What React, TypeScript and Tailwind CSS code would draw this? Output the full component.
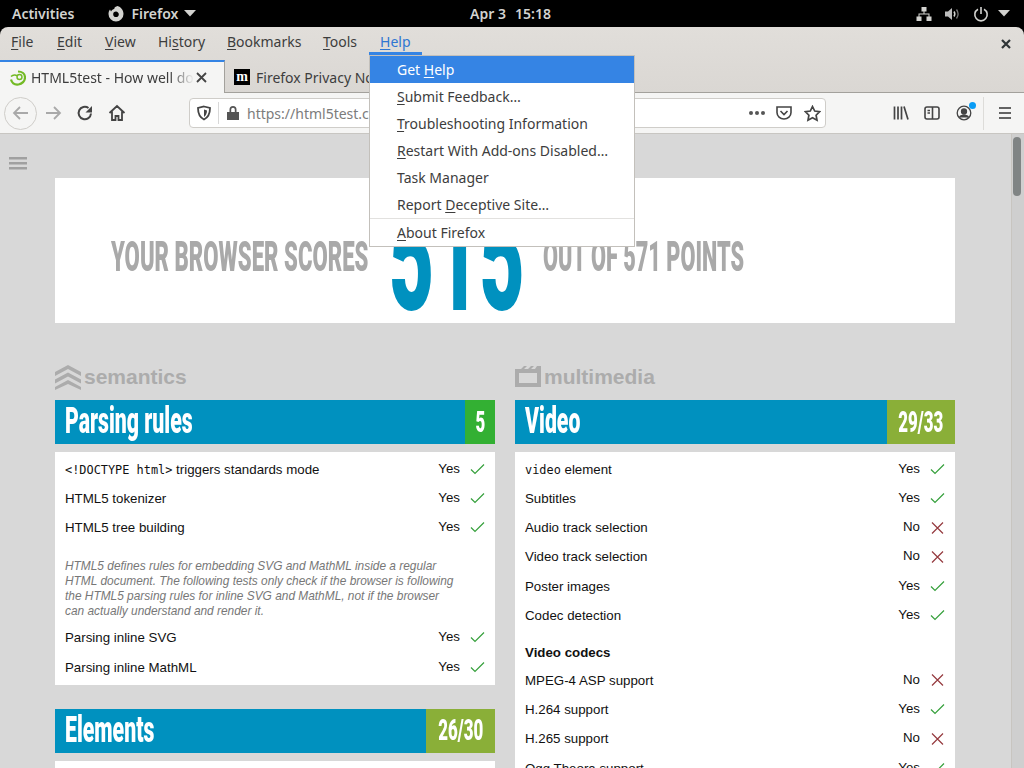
const ui = "font-['Noto_Sans',sans-serif]"
const condensed = "font-['Roboto','Liberation_Sans',sans-serif] font-black"

type Row = { label: string; code?: string; result: 'Yes' | 'No' }

const parsingA: Row[] = [
  { code: '<!DOCTYPE html>', label: ' triggers standards mode', result: 'Yes' },
  { label: 'HTML5 tokenizer', result: 'Yes' },
  { label: 'HTML5 tree building', result: 'Yes' },
]
const parsingB: Row[] = [
  { label: 'Parsing inline SVG', result: 'Yes' },
  { label: 'Parsing inline MathML', result: 'Yes' },
]
const videoA: Row[] = [
  { code: 'video', label: ' element', result: 'Yes' },
  { label: 'Subtitles', result: 'Yes' },
  { label: 'Audio track selection', result: 'No' },
  { label: 'Video track selection', result: 'No' },
  { label: 'Poster images', result: 'Yes' },
  { label: 'Codec detection', result: 'Yes' },
]
const videoB: Row[] = [
  { label: 'MPEG-4 ASP support', result: 'No' },
  { label: 'H.264 support', result: 'Yes' },
  { label: 'H.265 support', result: 'No' },
  { label: 'Ogg Theora support', result: 'Yes' },
]

function ResultRow({ row }: { row: Row }) {
  return (
    <div className="h-[29.3px] flex items-center text-[13.3px] text-[#111]">
      <span className="flex-1 pt-px whitespace-pre">
        {row.code && <code className="font-['DejaVu_Sans_Mono',monospace] text-[11.9px]">{row.code}</code>}
        {row.label}
      </span>
      <span className="-mt-px">{row.result}</span>
      <span className="w-[25px] flex justify-end">
        {row.result === 'Yes' ? (
          <svg width="15" height="11" viewBox="0 0 15 11" fill="none" stroke="#36a03c" strokeWidth="1.2"><path d="M1 5.500 5 9.500 14 0.500" /></svg>
        ) : (
          <svg width="15" height="12" viewBox="0 0 15 12" fill="none" stroke="#953a3f" strokeWidth="1.2"><path d="M2 0.500 13 11.500M13 0.500 2 11.500" /></svg>
        )}
      </span>
    </div>
  )
}

function SectionHead({ title, score, w }: { title: string; score: string; w: string }) {
  return (
    <div className="h-11 bg-[#0091bf] flex text-white">
      <div className="flex-1 pl-2.5 overflow-hidden">
        <span className={`${condensed} inline-block origin-left scale-x-[0.59] text-[36px] leading-[43px] whitespace-nowrap`}>{title}</span>
      </div>
      <div className={`${w} ${score === '5' ? 'bg-[#33b033]' : 'bg-[#8aaf38]'} flex items-center justify-center overflow-hidden`}>
        <span className={`${condensed} text-[29px] leading-none inline-block scale-x-[0.58] whitespace-nowrap`}>{score}</span>
      </div>
    </div>
  )
}

function Topbar() {
  return (
    <div className="h-[27px] bg-black text-[#d3d3d0] text-[14px] font-semibold flex items-center shrink-0 relative">
      <span className="ml-3">Activities</span>
      <svg width="18" height="18" viewBox="0 0 18 18" className="ml-[33px]">
        <path d="M10.500 1C14 2 16.500 5 16.500 9A7.500 7.500 0 1 1 1.500 9C1.500 7.200 2 5.800 3 4.500L4 6.500C4.800 5.200 6 4.200 7.500 3.800 7 3 7.500 2 10.500 1ZM9 6.500A2.800 2.800 0 1 0 11.800 9.300C11.800 8 10.500 6.500 9 6.500Z" fill="#d3d3d0" fillRule="evenodd" />
      </svg>
      <span className="ml-1.5">Firefox</span>
      <svg width="12" height="7" viewBox="0 0 12 7" className="ml-1.5"><path d="M0 0h12L6 6.500z" fill="#d3d3d0" /></svg>
      <span className="absolute left-[470px]">Apr 3</span>
      <span className="absolute left-[515px]">15:18</span>
      <div className="ml-auto flex items-center mr-[14px]">
        <svg width="16" height="16" viewBox="0 0 16 16" fill="#d3d3d0">
          <path d="M5.500 1h5v4.500h-5zM0.500 10.500h5V15h-5zM10.500 10.500h5V15h-5z" />
          <path d="M7.500 5h1v2.500H13.500V11h-1V8.500h-9V11h-1V7.500h5z" />
        </svg>
        <svg width="16" height="16" viewBox="0 0 16 16" className="ml-[12px]" fill="none" stroke="#d3d3d0">
          <path d="M1 5.500h3L8 2v12L4 10.500H1z" fill="#bdbdbd" stroke="none" />
          <path d="M10 5.500c1 1.500 1 3.500 0 5" strokeWidth="1.500" />
          <path d="M12.500 3.500c2 2.800 2 6.200 0 9" stroke="#777" strokeWidth="1.300" />
        </svg>
        <svg width="16" height="16" viewBox="0 0 16 16" className="ml-[13px]" fill="none" stroke="#d3d3d0" strokeWidth="1.600">
          <path d="M5 3.200a6.200 6.200 0 1 0 6 0M8 1v7" />
        </svg>
        <svg width="12" height="7" viewBox="0 0 12 7" className="ml-[9px]"><path d="M0 0h12L6 6.500z" fill="#d3d3d0" /></svg>
      </div>
    </div>
  )
}

function U({ children }: { children: string }) {
  return <span className="underline underline-offset-[2px] decoration-1">{children}</span>
}

function MenuBar() {
  return (
    <div className="h-[33px] flex items-center text-[14px] text-[#3d3d3d] pl-[11px] pb-1 relative shrink-0">
      <span className="w-[46px]"><U>F</U>ile</span>
      <span className="w-[48px]"><U>E</U>dit</span>
      <span className="w-[53px]"><U>V</U>iew</span>
      <span className="w-[69px]">Hi<U>s</U>tory</span>
      <span className="w-[96px]"><U>B</U>ookmarks</span>
      <span className="w-[57px]"><U>T</U>ools</span>
      <span className="text-[#2f76d2]"><U>H</U>elp</span>
      <span className="absolute left-[369px] top-[25px] w-[53px] h-[3px] bg-[#3584e4]" />
      <svg width="10" height="10" viewBox="0 0 10 10" stroke="#2e3436" strokeWidth="2.200" className="absolute right-[13px] top-[12px]"><path d="M1 1l8 8M9 1 1 9" /></svg>
    </div>
  )
}

function TabStrip() {
  return (
    <div className="h-[33px] flex text-[14px] text-[#3d3d3d] border-b border-[#a3a19c] shrink-0">
      <div className="w-[225px] bg-[#f5f5f4] border-t-2 border-[#3584e4] border-r border-r-[#a3a19c] flex items-center pl-[10px] h-[33px]">
        <svg width="16" height="16" viewBox="0 0 16 16" fill="none" className="shrink-0">
          <path d="M1 9.500C2 13 5 15 8.500 14.500 12 14 15 11 15 7.500 15 4 12 1.500 8 1.500" stroke="#73ba25" strokeWidth="2.200" />
          <circle cx="9.500" cy="7" r="2.500" stroke="#73ba25" strokeWidth="1.400" />
          <path d="M1 6.500C3 4.500 6 4.500 7 6" stroke="#73ba25" strokeWidth="1.400" />
        </svg>
        <span className="ml-[5px] w-[163px] overflow-hidden whitespace-nowrap [mask-image:linear-gradient(to_right,black_85%,transparent)]">HTML5test - How well do</span>
        <svg width="11" height="11" viewBox="0 0 11 11" stroke="#444" strokeWidth="1.800" className="ml-[2px]"><path d="M1 1l9 9M10 1 1 10" /></svg>
      </div>
      <div className="flex items-center pl-[9px] pt-0.5 overflow-hidden w-[200px]">
        <span className="w-4 h-4 bg-black text-white text-[14px] font-bold leading-none flex items-center justify-center shrink-0 font-['Liberation_Serif',serif]">m</span>
        <span className="ml-[6px] whitespace-nowrap">Firefox Privacy Notice</span>
      </div>
    </div>
  )
}

function Toolbar() {
  return (
    <div className="h-[41px] bg-[#f5f5f4] flex items-center border-b border-[#c8c6c2] shrink-0 relative">
      <div className="ml-1 w-[33px] h-[33px] rounded-full border border-[#cfcdc9] flex items-center justify-center">
        <svg width="18" height="18" viewBox="0 0 18 18" fill="none" stroke="#a9a9a9" strokeWidth="1.800"><path d="M16 9H2M8 3 2 9l6 6" /></svg>
      </div>
      <svg width="18" height="18" viewBox="0 0 18 18" fill="none" stroke="#a9a9a9" strokeWidth="1.800" className="ml-[7px]"><path d="M2 9h14M10 3l6 6-6 6" /></svg>
      <svg width="18" height="18" viewBox="0 0 18 18" fill="none" stroke="#444" strokeWidth="2" className="ml-[14px]"><path d="M15 9.500A6.200 6.200 0 1 1 12.500 4" /><path d="M16 2v6.500H9.500z" fill="#444" stroke="none" /></svg>
      <svg width="18" height="18" viewBox="0 0 18 18" fill="none" stroke="#444" strokeWidth="1.800" className="ml-[14px]"><path d="M1.500 9 9 2l7.500 7M4 7.500V16h3.500v-4h3v4H14V7.500" /></svg>
      <div className="ml-[63px] w-[637px] h-[30px] bg-white border border-[#cfcdc9] rounded flex items-center shrink-0">
        <svg width="16" height="16" viewBox="0 0 16 16" fill="none" stroke="#444" strokeWidth="1.800" className="ml-[6px]"><path d="M8 1.500 14 3c0 5-1 9-6 11.500C3 12 2 8 2 3z" /><path d="M8 4.500 11 5.500c0 3-1 5-3 6.500z" fill="#444" stroke="none" /></svg>
        <span className="w-px h-[22px] bg-[#d8d8d8] ml-[6px]" />
        <svg width="14" height="16" viewBox="0 0 14 16" className="ml-[7px]"><path d="M3.500 7V4.500a3.500 3.500 0 0 1 7 0V7H13v8H1V7zM5.200 7h3.600V4.500a1.800 1.800 0 0 0-3.600 0z" fill="#555" fillRule="evenodd" /></svg>
        <span className="ml-[7px] text-[14px] text-[#7c7c7c] flex-1 whitespace-nowrap overflow-hidden">https://html5test.com</span>
        <span className="flex gap-[2px] mr-[11px]">
          <i className="w-1 h-1 rounded-full bg-[#555]" /><i className="w-1 h-1 rounded-full bg-[#555]" /><i className="w-1 h-1 rounded-full bg-[#555]" />
        </span>
        <svg width="16" height="16" viewBox="0 0 16 16" fill="none" stroke="#444" strokeWidth="1.600" className="mr-[12px]"><path d="M1 2h14v5.500a7 6.500 0 0 1-14 0z" /><path d="M4.500 6 8 9.500 11.500 6" /></svg>
        <svg width="17" height="17" viewBox="0 0 17 17" fill="none" stroke="#444" strokeWidth="1.700" className="mr-[4px]"><path d="m8.500 1.500 2.200 4.500 5 .7-3.600 3.500.9 5-4.500-2.400L4 15.200l.9-5L1.300 6.700l5-.7z" /></svg>
      </div>
      <svg width="16" height="16" viewBox="0 0 16 16" fill="none" stroke="#444" strokeWidth="1.700" className="absolute left-[893px]"><path d="M1.500 1.500v13M5 1.500v13M8.500 1.500v13M11 1.500l4 13" /></svg>
      <svg width="16" height="16" viewBox="0 0 16 16" fill="none" stroke="#444" strokeWidth="1.600" className="absolute left-[924px]"><rect x="1" y="2" width="14" height="12" rx="2" /><path d="M8.500 2v12M3.500 5.500h2.500M3.500 8h2.500" /></svg>
      <div className="absolute left-[956px] top-[12px] w-4 h-4">
        <svg width="16" height="16" viewBox="0 0 16 16" fill="none" stroke="#444" strokeWidth="1.300"><circle cx="8" cy="8" r="6.800" /><circle cx="8" cy="6.500" r="2.500" fill="#444" /><path d="M3.500 12.500c1-3 8-3 9 0" fill="#444" /></svg>
        <span className="absolute -top-[3px] right-[-4px] w-[7px] h-[7px] rounded-full bg-[#0a9cf5]" />
      </div>
      <span className="absolute left-[983px] top-[4px] w-px h-[33px] bg-[#dddcd9]" />
      <svg width="14" height="14" viewBox="0 0 14 14" stroke="#333" strokeWidth="1.700" className="absolute left-[998px]"><path d="M1 2h12M1 7h12M1 12h12" /></svg>
    </div>
  )
}

function HelpMenu() {
  return (
    <div className="absolute left-[369px] top-[55px] w-[266px] h-[192px] bg-white border border-[#c3c0bb] text-[14px] text-[#3d3d3d] z-10">
      <div className="h-[27px] bg-[#3584e4] text-white pl-[27px] flex items-center"><span>Get <U>H</U>elp</span></div>
      <div className="h-[27px] pl-[27px] flex items-center"><span><U>S</U>ubmit Feedback…</span></div>
      <div className="h-[27px] pl-[27px] flex items-center"><span><U>T</U>roubleshooting Information</span></div>
      <div className="h-[27px] pl-[27px] flex items-center"><span><U>R</U>estart With Add-ons Disabled…</span></div>
      <div className="h-[27px] pl-[27px] flex items-center"><span>Task Manager</span></div>
      <div className="h-[27px] pl-[27px] flex items-center"><span>Report <U>D</U>eceptive Site…</span></div>
      <div className="h-px bg-[#e2e1df]" />
      <div className="h-[27px] pl-[27px] flex items-center"><span><U>A</U>bout Firefox</span></div>
    </div>
  )
}

export default function App() {
  return (
    <div className="w-[1024px] h-[768px] overflow-hidden bg-black flex flex-col relative font-['Liberation_Sans',sans-serif]">
      <div className={ui}><Topbar /></div>
      <div className={`${ui} bg-gradient-to-b from-[#e1deda] to-[#dad7d3] rounded-t-lg flex flex-col shrink-0`}>
        <MenuBar />
        <TabStrip />
      </div>
      <div className={ui}><Toolbar /></div>

      <div className="flex-1 min-h-0 bg-[#d8d8d8] flex overflow-hidden">
        <main className="flex-1 min-w-0 relative">
          <svg width="18" height="14" viewBox="0 0 18 14" fill="#a0a0a0" className="absolute left-[9px] top-[23px]">
            <rect y="0" width="18" height="2.500" /><rect y="5" width="18" height="2.500" /><rect y="10" width="18" height="2.500" />
          </svg>

          <div className="ml-[55px] w-[900px] mt-11 h-[145px] bg-white flex items-center overflow-hidden pt-3">
            <div className={`${condensed} text-[#a9a9a9] text-[43px] leading-none whitespace-nowrap flex items-center ml-14`}>
              <span className="inline-block w-[278px] origin-left scale-x-[0.515]">YOUR BROWSER SCORES</span>
              <span className="text-[#0091bf] text-[150px] w-[154px] inline-block origin-left scale-x-[0.52] pt-1">515</span>
              <span className="inline-block origin-left scale-x-[0.505]">OUT OF 571 POINTS</span>
            </div>
          </div>

          <div className="ml-[55px] w-[900px] grid grid-cols-2 gap-x-5 mt-[38px]">
            <section>
              <h2 className="h-[39px] pb-2 flex items-center gap-[3px] text-[#acacac] text-[21px] font-bold">
                <svg width="26" height="26" viewBox="0 0 26 26" fill="#acacac" className="shrink-0">
                  <path d="M13 1 26 8v4L13 5 0 12V8zM13 8.500 26 15.500v4L13 12.500 0 19.500v-4zM13 16 26 23v3L13 20 0 26v-3z" />
                </svg>
                semantics
              </h2>
              <SectionHead title="Parsing rules" score="5" w="w-[30px]" />
              <div className="mt-2 bg-white px-2.5 pt-[2.4px] pb-[3px]">
                {parsingA.map(r => <ResultRow key={r.label} row={r} />)}
                <p className="mt-[17px] mb-[4px] text-[11.9px] leading-[15px] italic text-[#777] w-[392px]">
                  HTML5 defines rules for embedding SVG and MathML inside a regular HTML document. The following tests only check if the browser is following the HTML5 parsing rules for inline SVG and MathML, not if the browser can actually understand and render it.
                </p>
                {parsingB.map(r => <ResultRow key={r.label} row={r} />)}
              </div>
              <div className="mt-6">
                <SectionHead title="Elements" score="26/30" w="w-[69px]" />
              </div>
              <div className="mt-2 h-24 bg-white" />
            </section>
            <section>
              <h2 className="h-[39px] pb-2 flex items-center gap-[3px] text-[#acacac] text-[21px] font-bold">
                <svg width="26" height="21" viewBox="0 0 26 21" fill="#acacac" className="shrink-0">
                  <path d="M0 3h6l3-3h3L9 3h4l3-3h3l-3 3h4l2-3h4v21H0zM4 7v10h18V7z" fillRule="evenodd" />
                </svg>
                multimedia
              </h2>
              <SectionHead title="Video" score="29/33" w="w-[68px]" />
              <div className="mt-2 bg-white px-2.5 pt-[2.4px]">
                {videoA.map(r => <ResultRow key={r.label} row={r} />)}
                <div className="h-[35.5px] pt-[14px] text-[13.3px] font-bold text-[#111] leading-[18px]">Video codecs</div>
                {videoB.map(r => <ResultRow key={r.label} row={r} />)}
              </div>
            </section>
          </div>
        </main>
        <div className="w-[13px] bg-[#cfcfcf] border-l border-[#c8c5c0] pt-[3px] pl-[1px] shrink-0">
          <div className="w-2 h-[59px] rounded-full bg-[#808484]" />
        </div>
      </div>

      <div className={ui}><HelpMenu /></div>
    </div>
  )
}
